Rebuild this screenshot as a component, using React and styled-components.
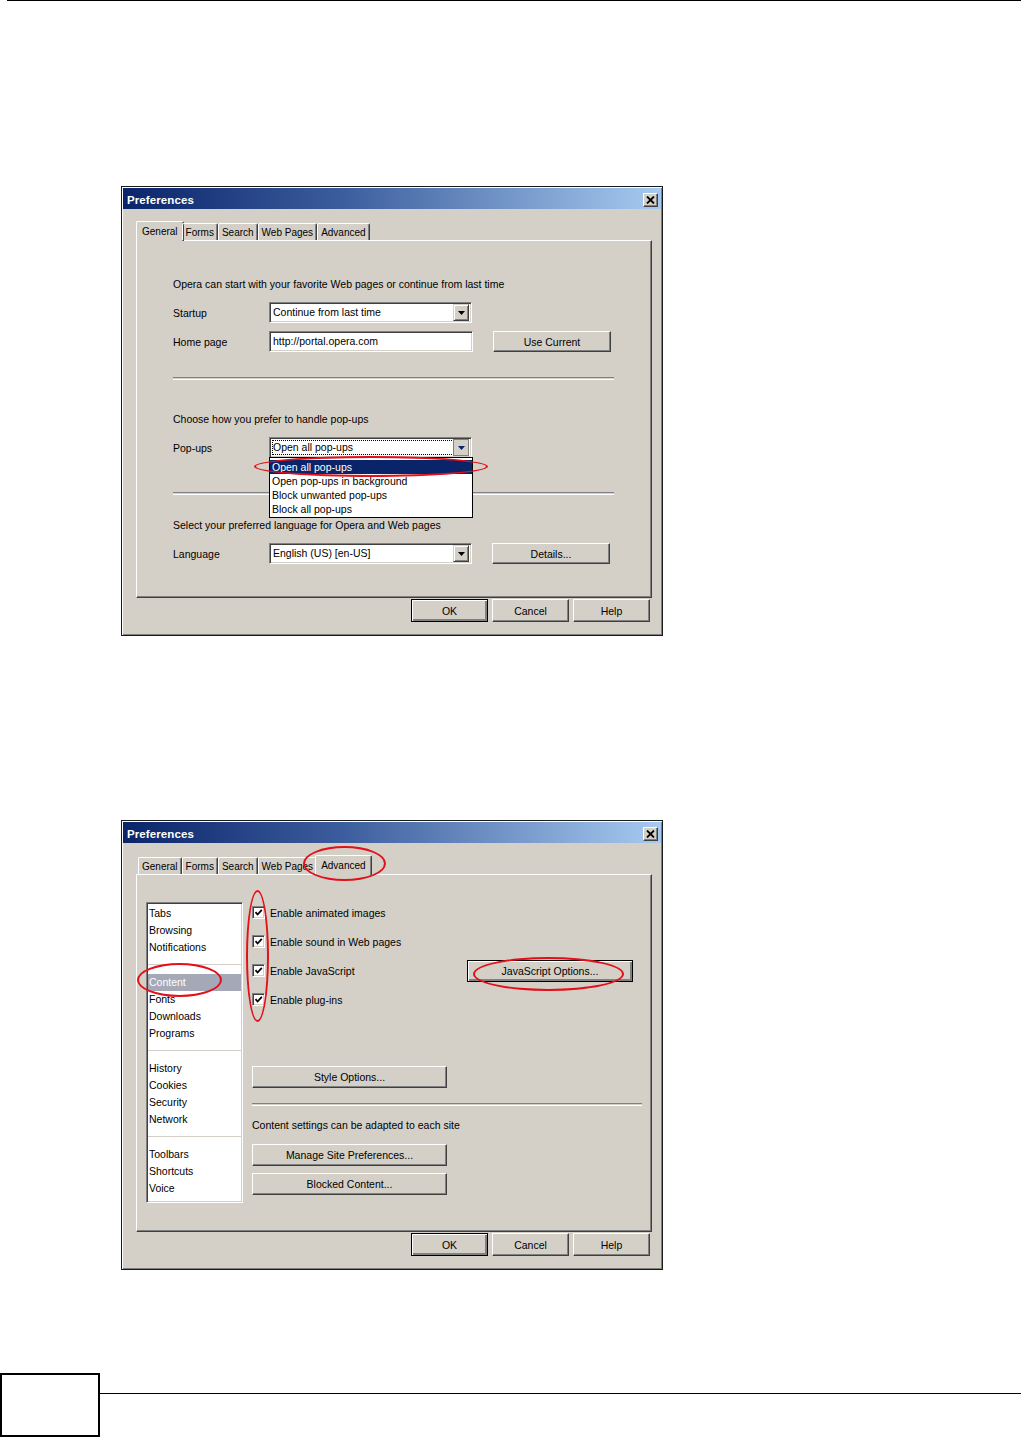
import styled, { createGlobalStyle, css } from "styled-components";

const GlobalStyle = createGlobalStyle`
  html, body {
    margin: 0;
    padding: 0;
    background: #fff;
  }
  body {
    font-family: "Liberation Sans", Arial, sans-serif;
  }
`;

const Page = styled.div`
  width: 1021px;
  height: 1437px;
  display: flex;
  flex-direction: column;
`;

const TopRule = styled.div`
  margin-left: 7px;
  height: 1px;
  background: #000;
`;

const Slot = styled.div`
  padding-left: 121px;
  margin-top: ${(p) => p.$top}px;
`;

const Dialog = styled.div`
  position: relative;
  width: 542px;
  height: 450px;
  box-sizing: border-box;
  padding: 1px;
  border: 1px solid #1a1a1a;
  background: #d4d0c8;
  box-shadow: inset 1px 1px 0 #fff, inset -1px -1px 0 #808080;
  display: flex;
  flex-direction: column;
  font-size: 10.5px;
  color: #000;
`;

const TitleBar = styled.div`
  height: 21px;
  flex-shrink: 0;
  box-sizing: border-box;
  display: flex;
  align-items: center;
  justify-content: space-between;
  padding: 2px 3px 0 4px;
  background: linear-gradient(to right, #0a246a 0%, #3b5c9c 40%, #a6caf0 100%);
`;

const Title = styled.span`
  color: #fff;
  font-weight: bold;
  font-size: 11.5px;
  letter-spacing: 0.1px;
`;

const CloseBox = styled.div`
  width: 15px;
  height: 14px;
  box-sizing: border-box;
  background: #d4d0c8;
  border: 1px solid;
  border-color: #fff #404040 #404040 #fff;
  box-shadow: inset -1px -1px 0 #808080;
  display: flex;
  align-items: center;
  justify-content: center;
`;

const TabStrip = styled.div`
  display: flex;
  align-items: flex-end;
  height: 19px;
  margin: 12px 0 0 15px;
  position: relative;
  z-index: 1;
  font-size: 10px;
`;

const Tab = styled.div`
  height: 17px;
  box-sizing: border-box;
  padding: 0 3px 0 3px;
  display: flex;
  align-items: center;
  border-top: 1px solid #fff;
  border-left: 1px solid #fff;
  border-right: 1px solid #404040;
  border-radius: 2px 2px 0 0;
  box-shadow: inset -1px 0 0 #808080;
  white-space: nowrap;
  ${(p) =>
    p.$active &&
    css`
      height: 20px;
      margin: 0 -2px -1px -2px;
      padding: 0 5px 1px 5px;
      background: #d4d0c8;
    `}
`;

const TabPanel = styled.div`
  margin: 0 9px 0 13px;
  height: 358px;
  flex-shrink: 0;
  box-sizing: border-box;
  border-top: 1px solid #fff;
  border-left: 1px solid #fff;
  border-right: 1px solid #404040;
  border-bottom: 1px solid #404040;
  box-shadow: inset -1px -1px 0 #808080;
`;

const ButtonRow = styled.div`
  display: flex;
  justify-content: flex-end;
  gap: 4px;
  margin-top: 1px;
  padding-right: 11px;
`;

const Button = styled.div`
  width: ${(p) => p.$w || 77}px;
  height: ${(p) => p.$h || 23}px;
  flex-shrink: 0;
  box-sizing: border-box;
  display: flex;
  align-items: center;
  justify-content: center;
  background: #d4d0c8;
  border: 1px solid;
  border-color: #fff #404040 #404040 #fff;
  box-shadow: inset -1px -1px 0 #808080;
  white-space: nowrap;
  ${(p) =>
    p.$default &&
    css`
      border: 1px solid #000;
      box-shadow: inset 1px 1px 0 #fff, inset -2px -2px 0 #808080;
    `}
`;

/* ---------- General tab ---------- */

const GeneralPane = styled.div`
  padding: 36px 0 0 36px;
`;

const Line = styled.div`
  line-height: 14px;
  height: 14px;
  margin-top: ${(p) => p.$mt || 0}px;
  white-space: nowrap;
`;

const FieldRow = styled.div`
  display: flex;
  align-items: center;
  height: 21px;
  margin-top: ${(p) => p.$mt || 0}px;
`;

const Label = styled.span`
  width: 96px;
  flex-shrink: 0;
  white-space: nowrap;
`;

const Gap = styled.div`
  width: 20px;
  flex-shrink: 0;
`;

const Anchor = styled.div`
  position: relative;
`;

const Field = styled.div`
  position: relative;
  width: ${(p) => p.$w || 204}px;
  height: 21px;
  flex-shrink: 0;
  box-sizing: border-box;
  background: #fff;
  border: 1px solid;
  border-color: #808080 #fff #fff #808080;
  box-shadow: inset 1px 1px 0 #404040, inset -1px -1px 0 #d4d0c8;
  display: flex;
  align-items: center;
  padding: 0 2px 0 3px;
  white-space: nowrap;
`;

const FieldText = styled.span`
  flex: 1;
  line-height: 13px;
  ${(p) =>
    p.$focus &&
    css`
      outline: 1px dotted #000;
      outline-offset: 0;
    `}
`;

const ArrowButton = styled.div`
  width: 16px;
  height: 17px;
  box-sizing: border-box;
  background: #d4d0c8;
  border: 1px solid;
  border-color: #d4d0c8 #404040 #404040 #d4d0c8;
  box-shadow: inset 1px 1px 0 #fff, inset -1px -1px 0 #808080;
  display: flex;
  align-items: center;
  justify-content: center;
  ${(p) =>
    p.$pressed &&
    css`
      border-color: #808080;
      box-shadow: none;
    `}
`;

const Etch = styled.div`
  width: ${(p) => p.$w}px;
  height: 1px;
  border-top: 1px solid #808080;
  border-bottom: 1px solid #fff;
  margin-top: ${(p) => p.$mt || 0}px;
`;

const DropList = styled.div`
  position: absolute;
  left: 0;
  top: 20px;
  width: 204px;
  box-sizing: border-box;
  padding: 2px 0 1px;
  background: #fff;
  border: 1px solid #000;
  z-index: 3;
`;

const DropItem = styled.div`
  height: 14px;
  line-height: 14px;
  padding-left: 2px;
  white-space: nowrap;
  ${(p) =>
    p.$selected &&
    css`
      background: #0a246a;
      color: #fff;
    `}
`;

const Ring = styled.div`
  position: absolute;
  left: ${(p) => p.$x}px;
  top: ${(p) => p.$y}px;
  width: ${(p) => p.$w}px;
  height: ${(p) => p.$h}px;
  box-sizing: border-box;
  border: 2px solid #e3101a;
  border-radius: 50%;
  pointer-events: none;
  z-index: 5;
`;

/* ---------- Advanced tab ---------- */

const AdvancedPane = styled.div`
  display: flex;
  padding: 27px 9px 0 9px;
`;

const ListBox = styled.div`
  width: 97px;
  height: 301px;
  flex-shrink: 0;
  box-sizing: border-box;
  padding-top: 2px;
  background: #fff;
  border: 1px solid;
  border-color: #808080 #fff #fff #808080;
  box-shadow: inset 1px 1px 0 #404040, inset -1px -1px 0 #d4d0c8;
`;

const ListItem = styled.div`
  height: 17px;
  line-height: 17px;
  padding-left: 1px;
  margin: 0 1px;
  white-space: nowrap;
  ${(p) =>
    p.$selected &&
    css`
      background: #a5a8b6;
      color: #fff;
    `}
`;

const ListSep = styled.div`
  height: 1px;
  background: #d4d0c8;
  margin: 8px 1px 9px 1px;
`;

const Options = styled.div`
  flex: 1;
  margin-left: 9px;
  display: flex;
  flex-direction: column;
`;

const CheckRow = styled.div`
  display: flex;
  align-items: center;
  height: 21px;
  margin-top: ${(p) => p.$mt || 0}px;
`;

const CheckBox = styled.div`
  width: 13px;
  height: 13px;
  box-sizing: border-box;
  margin-right: 5px;
  background: #fff;
  border: 1px solid;
  border-color: #808080 #fff #fff #808080;
  box-shadow: inset 1px 1px 0 #404040, inset -1px -1px 0 #d4d0c8;
  display: flex;
  align-items: center;
  justify-content: center;
`;

const CheckLabel = styled.span`
  white-space: nowrap;
`;

const Push = styled.div`
  margin-left: auto;
  margin-right: 9px;
`;

const Spaced = styled.div`
  margin-top: ${(p) => p.$mt || 0}px;
`;

const Footer = styled.div`
  margin-top: auto;
  display: flex;
  align-items: flex-start;
`;

const PageBox = styled.div`
  width: 100px;
  height: 64px;
  box-sizing: border-box;
  border: 2px solid #000;
`;

const FooterRule = styled.div`
  flex: 1;
  height: 1px;
  margin-top: 20px;
  background: #000;
`;

const CloseIcon = () => (
  <svg width="9" height="8" viewBox="0 0 9 8">
    <path d="M1 0.5 L8 7.5 M8 0.5 L1 7.5" stroke="#000" strokeWidth="1.8" />
  </svg>
);

const Arrow = ({ color = "#000" }) => (
  <svg width="7" height="4" viewBox="0 0 7 4">
    <path d="M0 0 H7 L3.5 4 Z" fill={color} />
  </svg>
);

const Check = () => (
  <svg width="9" height="9" viewBox="0 0 9 9">
    <path d="M1.5 4.2 L3.6 6.5 L7.8 1.8" fill="none" stroke="#000" strokeWidth="1.8" />
  </svg>
);

const tabNames = ["General", "Forms", "Search", "Web Pages", "Advanced"];

function Window({ active, overlay, children }) {
  return (
    <Dialog>
      <TitleBar>
        <Title>Preferences</Title>
        <CloseBox>
          <CloseIcon />
        </CloseBox>
      </TitleBar>
      <TabStrip>
        {tabNames.map((t) => (
          <Tab key={t} $active={t === active}>
            {t}
          </Tab>
        ))}
      </TabStrip>
      <TabPanel>{children}</TabPanel>
      <ButtonRow>
        <Button $default>OK</Button>
        <Button>Cancel</Button>
        <Button>Help</Button>
      </ButtonRow>
      {overlay}
    </Dialog>
  );
}

function Select({ value, open, focus }) {
  return (
    <Field $w={203}>
      <FieldText $focus={focus}>{value}</FieldText>
      <ArrowButton $pressed={open}>
        <Arrow color={open ? "#0a246a" : "#000"} />
      </ArrowButton>
    </Field>
  );
}

const popupOptions = [
  "Open all pop-ups",
  "Open pop-ups in background",
  "Block unwanted pop-ups",
  "Block all pop-ups",
];

function GeneralTab() {
  return (
    <GeneralPane>
      <Line>Opera can start with your favorite Web pages or continue from last time</Line>
      <FieldRow $mt={11}>
        <Label>Startup</Label>
        <Select value="Continue from last time" />
      </FieldRow>
      <FieldRow $mt={8}>
        <Label>Home page</Label>
        <Field>
          <FieldText>http://portal.opera.com</FieldText>
        </Field>
        <Gap />
        <Button $w={118} $h={21}>Use Current</Button>
      </FieldRow>
      <Etch $w={441} $mt={25} />
      <Line $mt={32}>Choose how you prefer to handle pop-ups</Line>
      <FieldRow $mt={11}>
        <Label>Pop-ups</Label>
        <Anchor>
          <Select value="Open all pop-ups" open focus />
          <DropList>
            {popupOptions.map((o, i) => (
              <DropItem key={o} $selected={i === 0}>
                {o}
              </DropItem>
            ))}
          </DropList>
          <Ring $x={-15} $y={19} $w={234} $h={21} />
        </Anchor>
      </FieldRow>
      <Etch $w={441} $mt={34} />
      <Line $mt={23}>Select your preferred language for Opera and Web pages</Line>
      <FieldRow $mt={11}>
        <Label>Language</Label>
        <Select value="English (US) [en-US]" />
        <Gap />
        <Button $w={118} $h={21}>Details...</Button>
      </FieldRow>
    </GeneralPane>
  );
}

const listGroups = [
  ["Tabs", "Browsing", "Notifications"],
  ["Content", "Fonts", "Downloads", "Programs"],
  ["History", "Cookies", "Security", "Network"],
  ["Toolbars", "Shortcuts", "Voice"],
];

const checks = [
  "Enable animated images",
  "Enable sound in Web pages",
  "Enable JavaScript",
  "Enable plug-ins",
];

function AdvancedTab() {
  return (
    <AdvancedPane>
      <ListBox>
        {listGroups.map((g, gi) => (
          <div key={gi}>
            {gi > 0 && <ListSep />}
            {g.map((item) => (
              <ListItem key={item} $selected={item === "Content"}>
                {item}
              </ListItem>
            ))}
          </div>
        ))}
      </ListBox>
      <Options>
        {checks.map((c, i) => (
          <CheckRow key={c} $mt={i === 0 ? 0 : 8}>
            <CheckBox>
              <Check />
            </CheckBox>
            <CheckLabel>{c}</CheckLabel>
            {i === 2 && (
              <Push>
                <Button $w={166} $h={22} $default>
                  JavaScript Options...
                </Button>
              </Push>
            )}
          </CheckRow>
        ))}
        <Spaced $mt={56}>
          <Button $w={195} $h={22}>Style Options...</Button>
        </Spaced>
        <Etch $w={390} $mt={15} />
        <Line $mt={12}>Content settings can be adapted to each site</Line>
        <Spaced $mt={12}>
          <Button $w={195} $h={22}>Manage Site Preferences...</Button>
        </Spaced>
        <Spaced $mt={7}>
          <Button $w={195} $h={22}>Blocked Content...</Button>
        </Spaced>
      </Options>
    </AdvancedPane>
  );
}

export default function App() {
  return (
    <Page>
      <GlobalStyle />
      <TopRule />
      <Slot $top={185}>
        <Window active="General">
          <GeneralTab />
        </Window>
      </Slot>
      <Slot $top={184}>
        <Window
          active="Advanced"
          overlay={
            <>
              <Ring $x={181} $y={25} $w={83} $h={35} />
              <Ring $x={124} $y={69} $w={23} $h={132} />
              <Ring $x={15} $y={142} $w={85} $h={34} />
              <Ring $x={351} $y={136} $w={151} $h={34} />
            </>
          }
        >
          <AdvancedTab />
        </Window>
      </Slot>
      <Footer>
        <PageBox />
        <FooterRule />
      </Footer>
    </Page>
  );
}
